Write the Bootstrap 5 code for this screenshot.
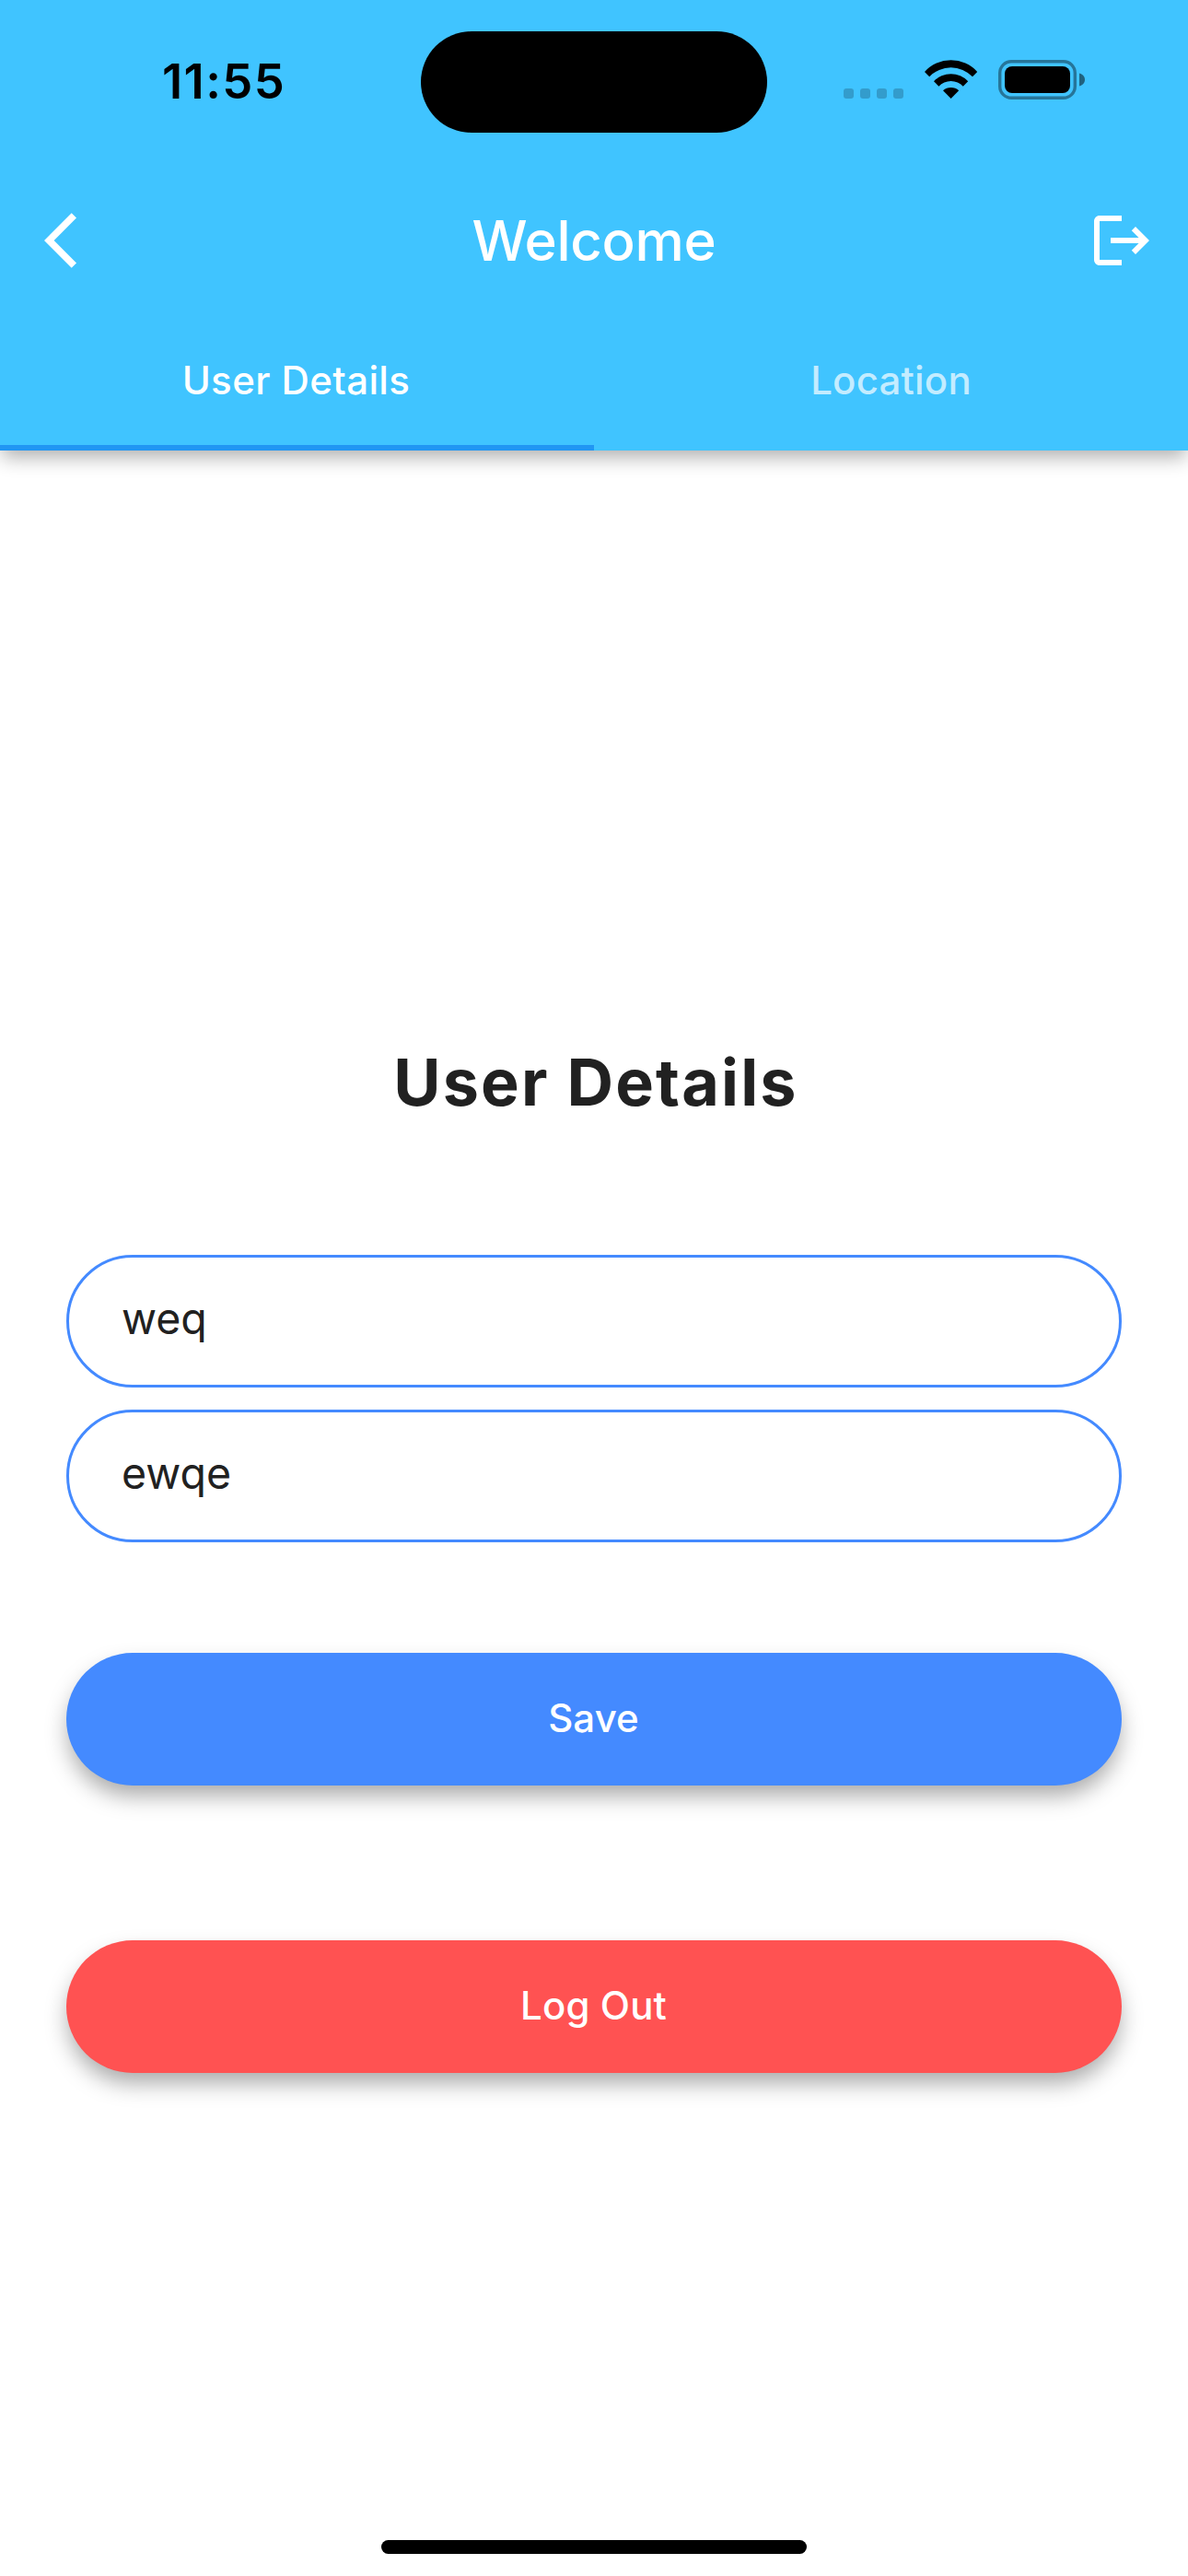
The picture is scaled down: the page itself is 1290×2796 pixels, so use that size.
<!DOCTYPE html>
<html lang="en">
<head>
<meta charset="utf-8">
<meta name="viewport" content="width=device-width, initial-scale=1">
<title>Welcome</title>
<link href="https://cdn.jsdelivr.net/npm/bootstrap@5.3.0/dist/css/bootstrap.min.css" rel="stylesheet">
<style>
  body { font-family: Inter, "Liberation Sans", sans-serif; width: 1290px; height: 2796px; overflow: hidden; background: #fff; color: #212121; }
  svg { display: block; flex: none; }
  .app-header { background: #40c4ff; height: 489px; box-shadow: 0 9px 20px -2px rgba(0,0,0,.32); z-index: 1; }

  .status-bar { height: 177px; padding-left: 176px; padding-right: 112px; }
  .clock { margin-top: 62px; font-size: 52.5px; line-height: 52px; font-weight: 600; letter-spacing: 1.4px; color: #000; width: 281px; }
  .island { margin-top: 33.5px; width: 376px; height: 110.5px; background: #000; }
  .status-icons { margin-top: 65px; height: 43px; }
  .signal { gap: 7px; margin-left: 83px; padding-bottom: 1px; }
  .signal i { width: 11px; height: 11px; border-radius: 3px; background: #000; opacity: .2; }
  .wifi { margin-left: 23px; }
  .battery { margin-left: 22px; }

  .title-bar { height: 168px; padding: 0 36px 0 48px; }
  .page-title { font-size: 60px; line-height: 72px; font-weight: 500; letter-spacing: -.3px; margin: 0 0 0 -12px; color: #fff; }

  .tab-strip { height: 144px; }
  .tab-strip .nav-link { height: 144px; padding: 0 0 3px; border-bottom: 6px solid transparent; font-size: 42px; line-height: 48px; font-weight: 500; letter-spacing: .2px; color: rgba(255,255,255,.7); }
  .tab-strip .nav-link.active { color: #fff; border-bottom-color: #2196f3; padding-right: 2px; letter-spacing: .4px; }

  .details { padding: 640px 72px 0; }
  .details h2 { font-size: 70px; line-height: 92px; font-weight: 700; letter-spacing: 2.18px; margin: 0 0 141px; padding-left: 4px; }
  .details .form-control { height: 144px; border: 3px solid #448aff; border-radius: 72px; padding: 0 57px 6px; font-size: 46.5px; line-height: 60px; color: #212121; margin-bottom: 24px; }
  .details .btn { height: 144px; border: 0; border-radius: 72px; padding: 0 1px 2px 0; font-size: 42px; line-height: 48px; font-weight: 500; letter-spacing: .1px; color: #fff; box-shadow: 0 13px 24px -2px rgba(0,0,0,.34); }
  .btn-save { background: #448aff; margin-top: 120px; margin-bottom: 168px; }
  .btn-logout { background: #ff5252; }

  .home-bar { width: 462px; height: 15px; background: #000; margin-bottom: 24px; }
</style>
<script src="https://cdn.jsdelivr.net/npm/bootstrap@5.3.0/dist/js/bootstrap.bundle.min.js"></script>
</head>
<body class="d-flex flex-column">
<header class="app-header position-relative flex-shrink-0">
  <div class="status-bar d-flex align-items-start">
    <div class="clock flex-shrink-0">11:55</div>
    <div class="island rounded-pill flex-shrink-0"></div>
    <div class="status-icons d-flex flex-shrink-0">
      <div class="signal d-flex align-items-end"><i></i><i></i><i></i><i></i></div>
      <svg class="wifi" width="58" height="43" viewBox="0 0 58 43">
        <path d="M0 13A38.500 38.500 0 0 1 57.200 13L52 18.300A32.500 32.500 0 0 0 5.200 18.300Z"/>
        <path d="M10 23.300A25.500 25.500 0 0 1 47.200 23.300L41.800 28.700A18 18 0 0 0 15.400 28.700Z"/>
        <path d="M20 33.300A13 13 0 0 1 37.200 33.300L28.600 42Z"/>
      </svg>
      <svg class="battery" width="95" height="43" viewBox="0 0 95 43">
        <rect x="1.700" y="1.700" width="81.600" height="39.600" rx="12.500" fill="none" stroke="#000" stroke-opacity=".4" stroke-width="3.400"/>
        <rect x="7" y="7" width="71" height="29" rx="8"/>
        <path d="M88 14.500C91.500 15.500 94 18 94 21.500S91.500 27.500 88 28.500Z" fill-opacity=".5"/>
      </svg>
    </div>
  </div>
  <div class="title-bar d-flex align-items-center justify-content-between">
    <svg width="72" height="72" viewBox="0 0 24 24" fill="#fff"><path d="M11.670 3.870L9.900 2.100 0 12l9.900 9.900 1.770-1.770L3.540 12z"/></svg>
    <h1 class="page-title">Welcome</h1>
    <svg width="72" height="72" viewBox="0 0 24 24" fill="#fff"><path d="M17 7l-1.410 1.410L18.170 11H8v2h10.170l-2.580 2.580L17 17l5-5zM4 5h8V3H4c-1.100 0-2 .9-2 2v14c0 1.100.9 2 2 2h8v-2H4V5z"/></svg>
  </div>
  <nav class="tab-strip nav nav-fill row g-0">
    <a class="nav-link active col-6 d-flex align-items-center justify-content-center" href="#">User Details</a>
    <a class="nav-link col-6 d-flex align-items-center justify-content-center" href="#">Location</a>
  </nav>
</header>
<main class="details flex-grow-1">
  <h2 class="text-center">User Details</h2>
  <input class="form-control" type="text" value="weq" aria-label="First name">
  <input class="form-control" type="text" value="ewqe" aria-label="Last name">
  <button class="btn btn-save w-100 d-block" type="button">Save</button>
  <button class="btn btn-logout w-100 d-block" type="button">Log Out</button>
</main>
<div class="home-bar rounded-pill mx-auto flex-shrink-0"></div>
</body>
</html>
